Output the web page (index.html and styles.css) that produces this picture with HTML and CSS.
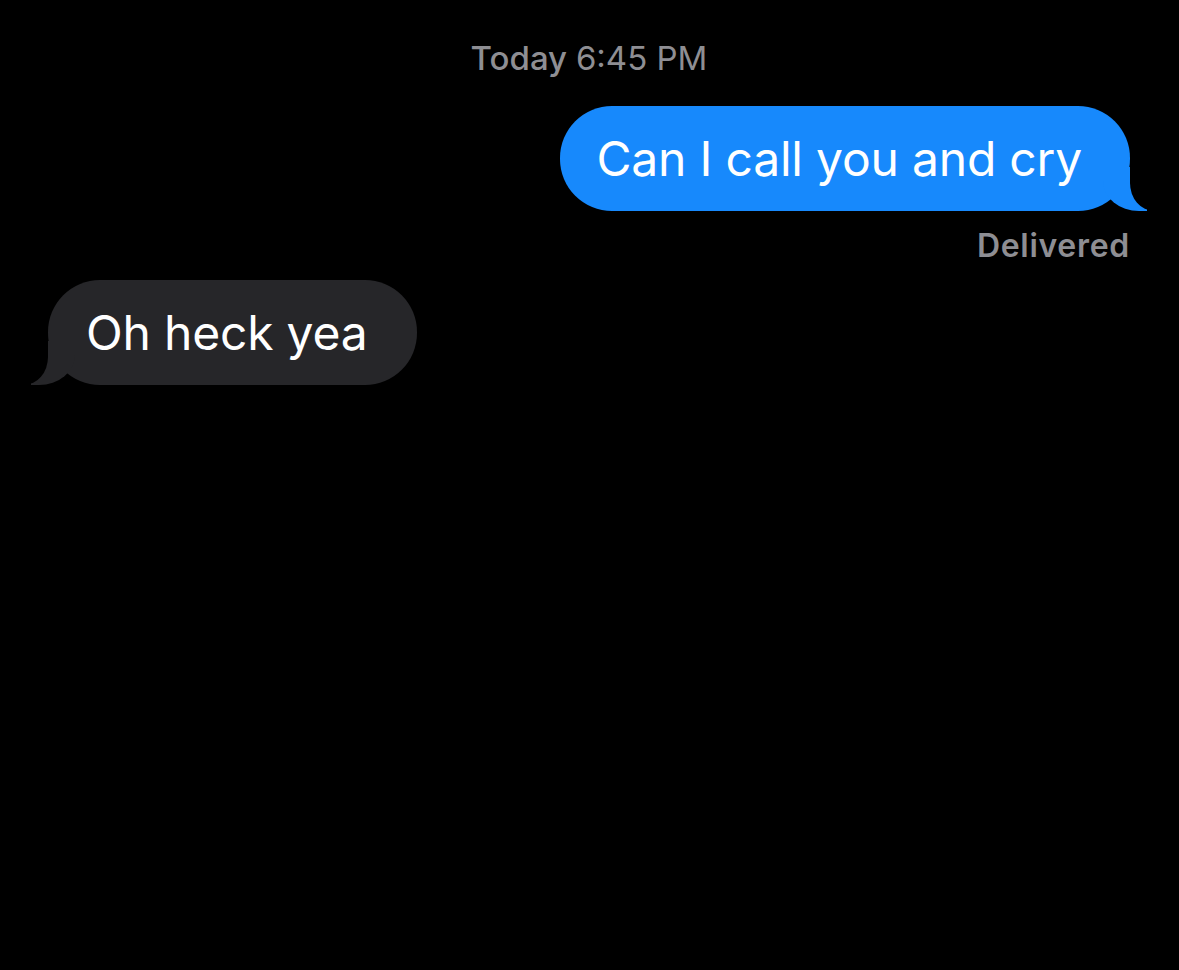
FILE: index.html
```html
<!DOCTYPE html>
<html lang="en">
<head>
  <meta charset="UTF-8" />
  <meta name="viewport" content="width=device-width, initial-scale=1.0"/>
  <title>Messages</title>
  <link rel="stylesheet" href="styles.css">
</head>
<body>
  <div class="thread">
    <div class="timestamp">Today <span class="time">6:45 PM</span></div>

    <div class="row row-sent">
      <div class="bubble sent">Can I call you and cry</div>
    </div>
    <div class="status">Delivered</div>

    <div class="row row-received">
      <div class="bubble received">Oh heck yea</div>
    </div>
  </div>
</body>
</html>
```

FILE: styles.css
```css
body {
  margin: 0;
  background: #000;
  color: #fff;
  font-family: Inter, "Noto Sans", "Liberation Sans", sans-serif;
  min-height: 100vh;
}
.thread {
  display: flex;
  flex-direction: column;
  padding: 35px 49px 0 48px;
}
.timestamp {
  text-align: center;
  color: #8e8e93;
  font-size: 33px;
  line-height: 46px;
  font-weight: 500;
  margin-bottom: 25px;
}
.timestamp .time {
  font-weight: 400;
}
.row {
  display: flex;
}
.row-sent {
  justify-content: flex-end;
}
.row-received {
  justify-content: flex-start;
  margin-top: 13px;
}
.bubble {
  position: relative;
  font-size: 48px;
  line-height: 58px;
  padding: 24px 48px 23px 38px;
  border-radius: 52px;
  letter-spacing: -0.2px;
}
.sent {
  background: #1789fc;
  padding-left: 36px;
}
.received {
  background: #262629;
  padding-right: 50px;
}

/* tails */
.bubble::before,
.bubble::after {
  content: "";
  position: absolute;
  bottom: 0;
  height: 44px;
}
.sent::before {
  right: -17px;
  width: 44px;
  background: #1789fc;
  border-bottom-left-radius: 36px 30px;
}
.sent::after {
  right: -62px;
  width: 62px;
  background: #000;
  border-bottom-left-radius: 24px 28px;
}
.received::before {
  left: -17px;
  width: 44px;
  background: #262629;
  border-bottom-right-radius: 36px 30px;
}
.received::after {
  left: -62px;
  width: 62px;
  background: #000;
  border-bottom-right-radius: 24px 28px;
}

.status {
  align-self: flex-end;
  color: #8e8e93;
  font-size: 32px;
  font-weight: 600;
  line-height: 42px;
  letter-spacing: 0.7px;
  margin-top: 14px;
}
```
